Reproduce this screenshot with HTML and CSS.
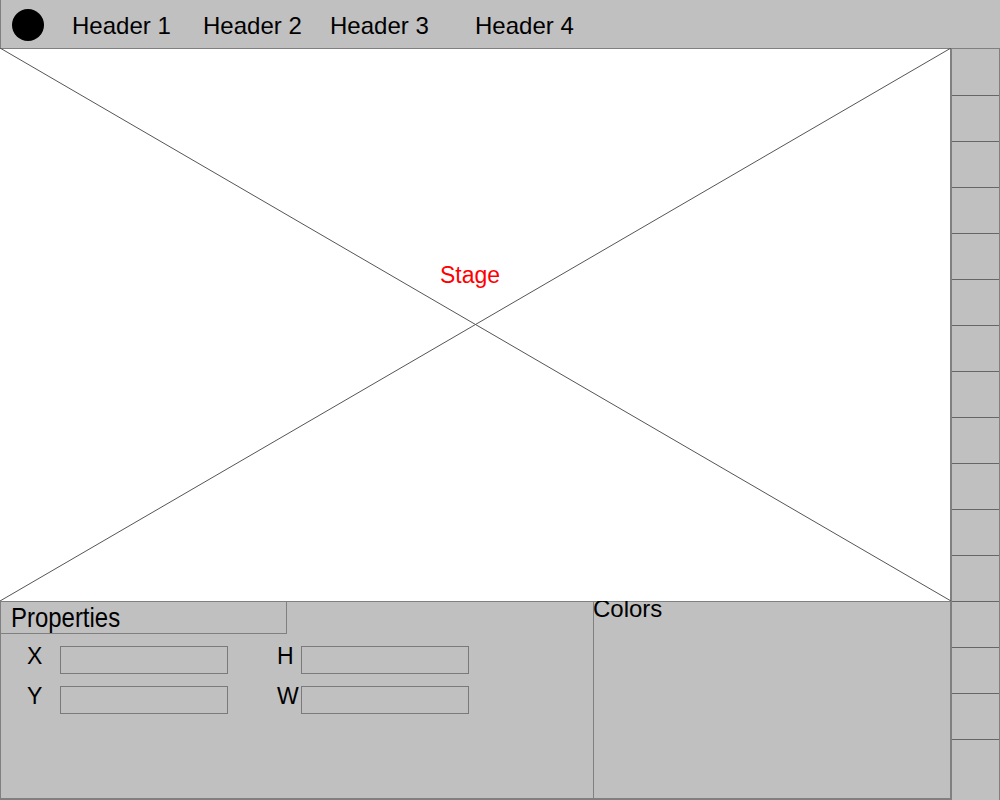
FILE: index.html
```html
<!DOCTYPE html>
<html>
  <head>
    <meta charset="UTF-8" />
    <title>Editor Wireframe</title>
    <link rel="stylesheet" href="styles.css">
  </head>

  <body>
    <div class="app">
      <header class="topbar">
        <div class="logo"></div>
        <nav class="menu">
          <span>Header 1</span>
          <span>Header 2</span>
          <span>Header 3</span>
          <span>Header 4</span>
        </nav>
      </header>

      <div class="main">
        <div class="stage">
          <svg class="stage-x" viewBox="0 0 100 100" preserveAspectRatio="none">
            <line x1="0" y1="0" x2="100" y2="100" vector-effect="non-scaling-stroke" />
            <line x1="100" y1="0" x2="0" y2="100" vector-effect="non-scaling-stroke" />
          </svg>
          <div class="stage-label">Stage</div>
        </div>

        <div class="panel">
          <section class="properties">
            <div class="prop-tab"><span class="prop-title">Properties</span></div>
            <!-- position / size fields -->
            <div class="prop-grid">
              <label class="field-label">X</label>
              <div class="field"></div>
              <label class="field-label second">H</label>
              <div class="field"></div>
              <label class="field-label">Y</label>
              <div class="field"></div>
              <label class="field-label second">W</label>
              <div class="field"></div>
            </div>
          </section>
          <section class="colors">
            <div class="colors-title">Colors</div>
          </section>
        </div>
      </div>

      <aside class="toolbar">
        <div class="tool"></div>
        <div class="tool"></div>
        <div class="tool"></div>
        <div class="tool"></div>
        <div class="tool"></div>
        <div class="tool"></div>
        <div class="tool"></div>
        <div class="tool"></div>
        <div class="tool"></div>
        <div class="tool"></div>
        <div class="tool"></div>
        <div class="tool"></div>
        <div class="tool"></div>
        <div class="tool"></div>
        <div class="tool"></div>
      </aside>
    </div>
  </body>
</html>
```

FILE: styles.css
```css
* {
  box-sizing: border-box;
}

body {
  margin: 0;
  background-color: #c0c0c0;
  color: #000000;
  font-family: "Liberation Sans", Arial, sans-serif;
}

.app {
  display: grid;
  grid-template-columns: 950px 50px;
  grid-template-rows: 49px 751px;
  width: 1000px;
  height: 800px;
}

/* top bar */
.topbar {
  grid-column: 1 / 3;
  display: flex;
  align-items: center;
  padding: 2px 0 0 11px;
  background-color: #c0c0c0;
  border-left: 1px solid #808080;
  border-bottom: 1px solid #808080;
}

.logo {
  width: 32px;
  height: 32px;
  border-radius: 50%;
  background-color: #000000;
}

.menu {
  display: grid;
  grid-template-columns: 131px 127px 145px auto;
  margin: 2px 0 0 28px;
  font-size: 24px;
}

/* stage */
.main {
  display: flex;
  flex-direction: column;
}

.stage {
  position: relative;
  flex: 1;
  background-color: #ffffff;
  display: flex;
  flex-direction: column;
  align-items: center;
  padding-top: 213px;
}

.stage-x {
  position: absolute;
  left: 0;
  top: -1px;
  width: 951px;
  height: 553px;
}

.stage-x line {
  stroke: #555555;
  stroke-width: 1;
}

.stage-label {
  position: relative;
  margin-right: 10px;
  color: #ff0000;
  font-size: 23px;
}

/* bottom panel */
.panel {
  height: 199px;
  display: flex;
  border-top: 1px solid #808080;
  border-left: 1px solid #808080;
  border-bottom: 2px solid #808080;
  background-color: #c0c0c0;
}

.properties {
  width: 592px;
}

.prop-tab {
  width: 286px;
  height: 32px;
  padding-left: 10px;
  border-right: 1px solid #808080;
  border-bottom: 1px solid #808080;
  font-size: 28px;
  line-height: 31px;
}

/* no narrow face installed, so squeeze the regular one */
.prop-title {
  display: inline-block;
  transform: scaleX(0.855);
  transform-origin: left center;
}

.prop-grid {
  display: grid;
  grid-template-columns: 33px 168px 73px 168px;
  row-gap: 12px;
  margin: 12px 0 0 26px;
}

.field-label {
  font-size: 23px;
  line-height: 20px;
}

.field-label.second {
  padding-left: 49px;
}

.field {
  height: 28px;
  border: 1px solid #7a7a7a;
}

.colors {
  flex: 1;
  border-left: 1px solid #808080;
}

.colors-title {
  margin-left: -1px;
  font-size: 24px;
  line-height: 13px;
}

/* right tool column */
.toolbar {
  padding-top: 1px;
  border-left: 2px solid #808080;
  border-right: 1px solid #808080;
  background-color: #c0c0c0;
}

.tool {
  height: 46px;
  border-bottom: 1px solid #666666;
}
```
